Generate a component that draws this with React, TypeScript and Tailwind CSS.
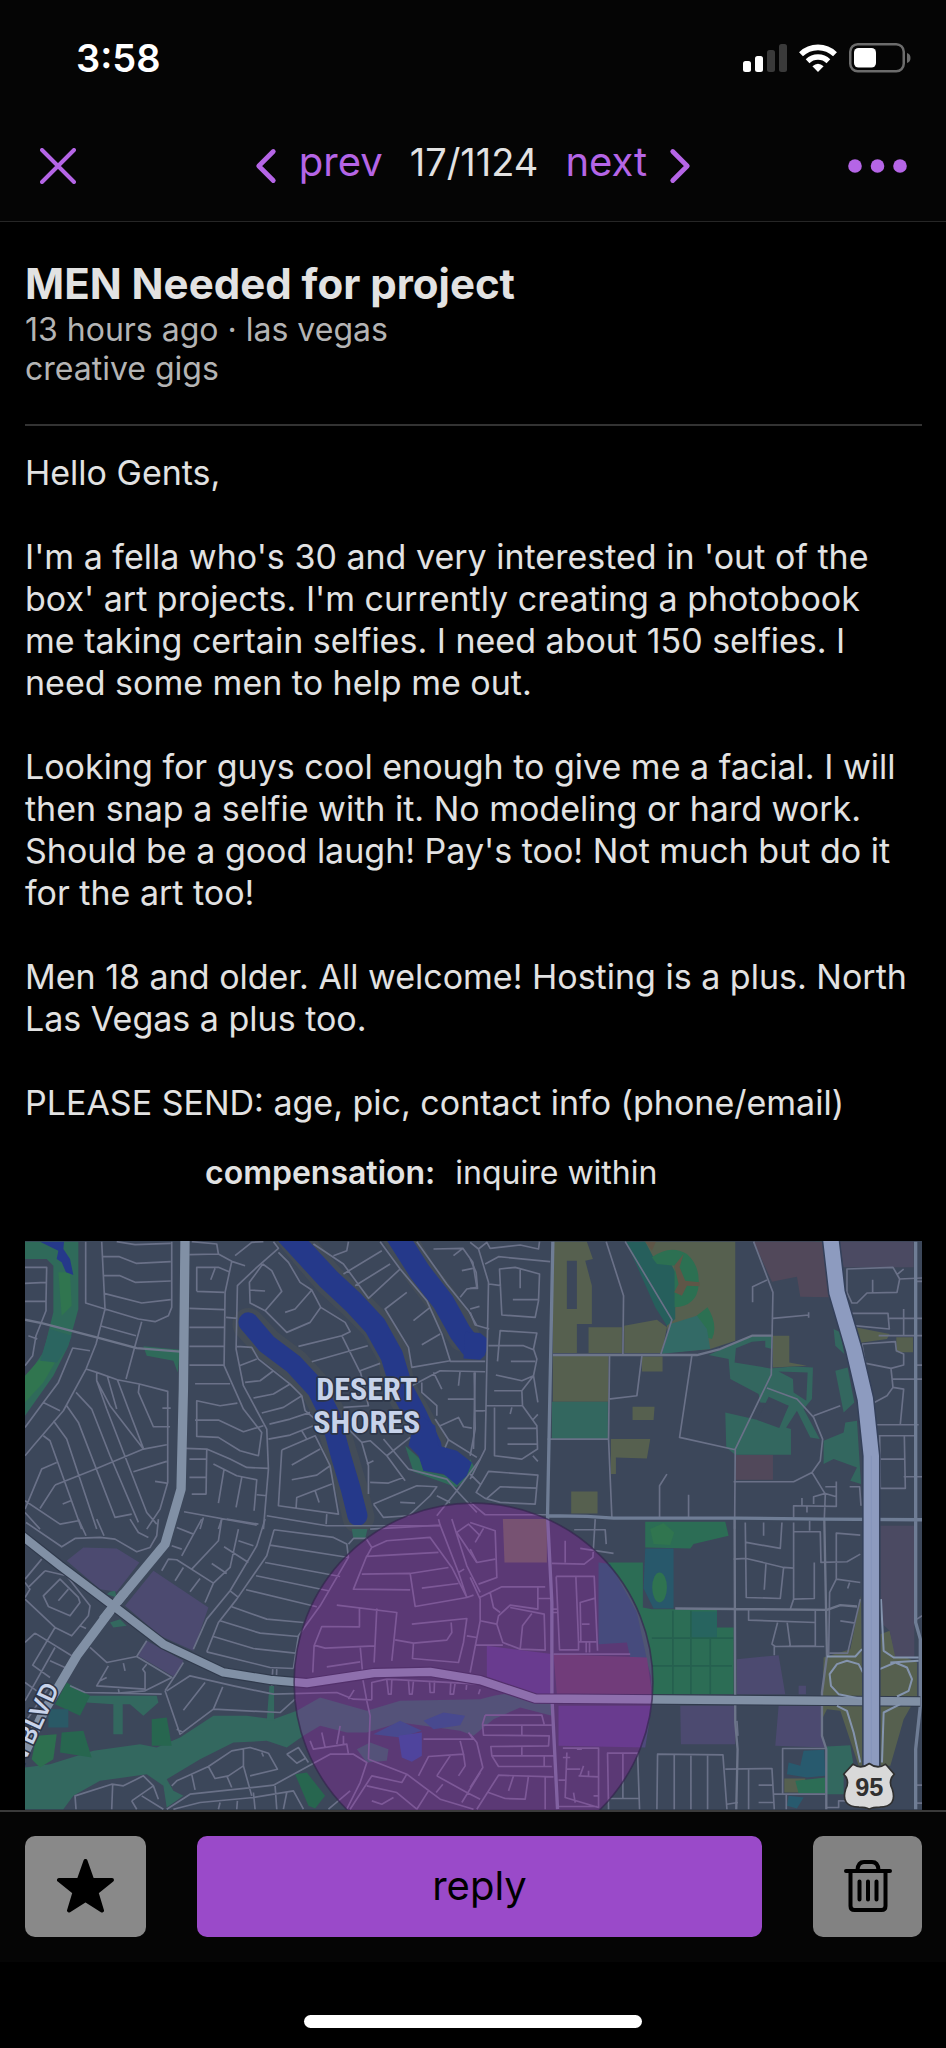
import React from 'react';
import { ChevronLeft, ChevronRight } from 'lucide-react';

const paragraphs = [
  'Hello Gents,',
  "I'm a fella who's 30 and very interested in 'out of the box' art projects. I'm currently creating a photobook me taking certain selfies. I need about 150 selfies. I need some men to help me out.",
  "Looking for guys cool enough to give me a facial. I will then snap a selfie with it. No modeling or hard work. Should be a good laugh! Pay's too! Not much but do it for the art too!",
  'Men 18 and older. All welcome! Hosting is a plus. North Las Vegas a plus too.',
  'PLEASE SEND: age, pic, contact info (phone/email)',
];

// Map data, one group per quadrant. Coordinates are local to the quadrant.
const streetsNW =
  'M75 115 140 115 138 217 75 217M75 163 138 160M138 217 138 245 108 320 98 380 75 410M257 38 257 222 315 240 415 270 465 278 505 260 515 235 515 38M305 38 315 240 288 345 258 420 190 545 100 650 75 680M307 83 358 83 408 103 512 98M310 140 360 140 405 160 512 156M312 193 425 222 512 212M350 38 405 47 512 43M300 290 408 320M425 278 405 350 378 450M75 595 130 520 175 460 218 357 270 365M130 520 180 545M85 320 112 330M258 420 290 430 352 452 418 465 503 487 503 760 480 840 440 900M290 430 290 455 330 530 430 660M352 452 385 540 430 658M322 442 350 540M200 530 235 580 345 865 395 855M228 490 275 540 330 680 415 880M290 455 320 540 440 850 470 885M160 575 200 630 290 900M130 620 150 635 245 900M75 840 125 720 170 700M165 768 290 718 430 660 500 647M400 728 500 697M465 757 500 762M165 768 120 838M75 815 180 885 235 875M75 850 120 900M188 825 212 815M418 465 415 490 460 593 510 593M487 537 512 537M575 38 650 45 655 75 568 77M655 75 695 97 735 110M705 80 755 40 790 38M695 97 675 190 672 410 730 540 785 610 775 680 720 665 655 625 590 622 590 515 660 530 712 522M585 573 655 573 730 608 790 590M590 187 590 115 655 115 687 128M590 187 672 190M645 118 632 152M568 238 672 242M568 295 672 295M568 352 672 352M568 408 672 408M585 464 690 464M678 265 712 268M820 38 835 58 770 115 712 170 708 360 730 470 800 600 805 720 790 900M788 105 815 125 845 187 795 245 750 222 748 160 788 105M748 183 795 186M795 245 860 310 930 280 962 235 935 183 900 160 865 100 835 70M855 250 885 240 935 183M962 235 1035 280 1050 308 1025 320 895 352M1025 320 1080 430M935 398 1103 350M1140 403 1080 425 1105 530 1030 535M710 352 755 355 775 390 870 465 905 500 915 545 950 575M718 410 770 390M735 460 780 455 820 425M760 507 820 495 870 465M785 552 850 535 905 500M808 585 870 570 930 550M805 630 870 618 940 590M845 663 945 620 990 710 1015 855 835 830 845 663M875 708 960 660M875 752 950 738 990 710M888 835 890 805 995 765M905 605 920 630M945 785 957 820M1045 38 1040 65 1000 80M940 45 1030 105 1105 208 1200 120M1140 38 1200 120 1280 215 1325 315 1350 395 1235 415 1225 355 1155 240 1220 190M1030 135 1145 65M1065 170 1170 105M1240 275 1290 235M1265 347 1320 315M1250 38 1340 165 1405 245 1430 290M1360 80 1388 58 1300 60M1388 58 1418 100 1430 175 1400 180 1380 205M1385 125 1418 118M1350 397 1455 397M1235 470 1320 425 1455 428M1265 460 1265 490 1310 530 1310 560M1305 570 1345 632 1430 685M1335 655 1345 632M1320 590 1375 565 1390 593 1415 597M1425 430 1420 660M1300 430 1325 480M1380 425 1375 470M1343 510 1425 510M1420 545 1450 545M1045 600 1085 640 1110 635 1160 680 1215 755M1085 640 1105 710 1105 795M1100 705 1120 695M1110 760 1165 762 1210 745M1160 680 1230 625M1150 630 1225 720 1340 750 1370 785 1440 690M1370 785 1430 850M1370 785 1310 860M1120 825 1250 770 1310 773 1290 800 1225 860 1150 865 1120 825M1200 820 1245 822M1310 800 1350 820M555 658 620 660 690 690 740 715 805 718M568 690 620 690M568 745 620 745M620 662 618 795 575 795M655 822 672 720M708 835 725 745M762 845 770 752 710 740 640 705M552 848 770 888M770 797 800 800M800 860 980 890 1320 890M980 855 978 885M610 865 600 900M665 870 655 900';

const streetsNE =
  'M408 38 460 200 458 375M465 38 605 272 572 375M850 38 908 190 903 437 795 660 793 900M908 268 1015 258M1015 250 1015 266M890 153 847 173 847 220M418 378 415 630 425 865M232 630 415 630M515 380 500 500 415 510M665 378 628 625 795 662M890 477 980 510 1030 565 1057 630 1050 695 1025 730 970 758 790 758M1030 560 1110 530M568 865 568 770 590 735M655 865 655 797M1025 730 1065 795 1062 870M970 865 970 830 1098 832 1098 757M1030 825 1030 803 1065 793 1098 803M1065 773 1098 773M1138 773 1168 773 1172 830M995 807 995 830M1010 830 1010 850M1130 120 1268 115 1288 150 1280 190 1190 192 1160 222 1145 222 1130 190zM1288 150 1355 147M1280 137 1300 120M1207 152 1207 190M1145 253 1253 253 1257 300 1150 290M1257 268 1355 268M1300 240 1300 320M1225 320 1355 320M1175 345 1275 338 1278 365 1300 375 1300 408 1262 418 1187 403M1262 418 1268 475 1250 500 1212 520M1268 475 1300 480 1290 585M1265 450 1355 450M1175 345 1215 587 1345 587M1225 620 1335 620M1228 620 1230 778 1305 778 1302 620M1228 690 1302 690M1300 743 1355 743M1338 157 1355 157M1338 408 1355 408M0 40 25 60 55 160 45 660 0 750M25 60 50 40 60 58 150 48 205 60 208 38M0 90 18 130 22 178 0 178M45 105 85 83 240 98M88 120 135 115 208 135 205 215 195 265 95 258zM57 165 93 170M150 120 150 178M128 212 205 212M0 240 28 232M0 250 15 288 57 300M82 397 90 305 200 312 190 360 200 390 190 440 155 485 157 530 200 590 202 660 155 690 73 680 73 535M55 350 160 350 190 362M122 397 195 397M77 438 155 455 190 440 203 520M72 485 155 485M45 530 157 530M120 555 125 535M112 598 200 598M112 645 200 645M188 572 203 556M188 680 203 697M12 430 15 600 0 680M15 545 45 545M18 790 55 727 203 738 195 825 90 820 45 808zM50 808 90 773 200 777M0 820 45 857 232 857M0 735 30 765';

const streetsSW =
  'M78 10 185 83 225 58 300 55 345 60 410 98 450 85 470 50 475 0M235 0 258 50M290 0 312 50M390 0 415 40 445 55M75 180 125 120M75 235 90 210 75 190M135 155 200 170 270 260 265 290 215 350 165 325 75 240M135 155 85 205M180 180 130 230 145 262 210 290 240 250 235 235zM175 245 205 210M240 320 258 328M165 325 98 438 150 475M105 342 215 410M75 370 105 342M75 545 165 385M150 425 195 445M75 490 110 515M75 610 150 500M270 385 320 430 410 412 440 365M410 412 515 475 435 515 355 522 255 520 210 500M325 440 290 500 435 510 435 460 428 450 440 435M370 432 375 455M355 510 358 525M300 485 320 475M485 525 355 522M515 80 545 90M530 25 580 45M485 155 505 120 530 122 640 192 690 145 715 30M575 150 655 65 665 0M545 110 605 0M640 192 615 250M525 185 550 145M570 218 600 178M635 133 680 163M672 83 745 130M715 65 760 80M680 0 775 15M795 0 770 80 690 215 620 300 580 390M822 32 800 110 710 240 655 310 620 398M822 32 1000 55 1040 75 1045 115 960 260 895 350 880 448M810 78 1045 115M795 130 1020 172M768 170 985 215M738 212 950 263M695 263 800 300 910 310M660 305 780 342 895 352M640 352 760 388 885 402M620 398 810 445 880 448M818 450 815 500M830 450 828 500M690 215 715 235M495 515 525 470 550 430M495 515 540 645 640 570 840 580 885 540M500 515 570 470 700 500 820 525 1010 520 1060 540 1115 542M1045 540 1062 512M550 573 615 490M640 570 668 503M530 630 550 640M515 800 530 785 625 742 695 695 750 685 805 702 832 750 750 770M730 690 730 740 755 830M575 765 585 812M680 770 695 805M730 740 685 770 645 778 625 742M785 700 790 712M500 870 570 825 820 798 990 705 1060 705 1100 730 1080 790 1040 870M860 705 895 685 925 730M860 705 890 732 915 718M228 870 225 830 335 795 370 800 430 770 460 800 475 840M338 795 335 870M395 845 460 800M395 845 410 870M425 830 490 870M520 870 600 850 760 835 880 815 910 870M655 870 660 850M710 870 712 845M760 820 765 870M825 800 830 870M850 870 860 820M985 870 1050 815M1115 85 1160 65 1290 55 1355 145 1400 235 1420 228M1100 110 1060 210 1230 212M1085 165 1230 163 1345 145M1100 112 1315 100M1230 163 1245 262 1400 235M1265 207 1375 193M1010 258 1190 280 1175 425M1130 268 1122 430M1078 268 1078 323 965 322 942 380 938 460M942 378 975 387 1125 380M1080 380 1087 455M980 443 1080 428M1235 315 1400 298 1390 370 1375 430 1237 418 1240 372M1185 362 1240 372 1340 363 1355 340 1353 310M1400 350 1430 355M1315 0 1320 18 1375 160 1400 235M1355 0 1400 140 1440 220M1375 160 1392 150M1440 50 1405 15 1370 40 1430 130M1110 30 1320 18M1045 75 1060 58 1098 58 1115 85 1100 112M1160 483 1165 525 1173 525 1175 483M1225 485 1228 525 1236 525 1240 485M1288 485 1290 520 1302 520 1303 485M1352 488 1350 525 1360 525 1365 490M1400 490 1398 512M1440 510 1435 525M1115 542 1115 490 1160 480 1440 495M1088 480 1100 545 1110 590 1105 720M930 665 940 690 1040 675 1045 705M965 640 975 685M1020 620 1010 675M1030 650 1030 675M1105 720 1220 765 1320 840 1420 870M1220 765 1205 790 1115 770 1050 870M1100 800 1190 820 1250 870M1115 845 1145 855 1180 835M1285 815 1250 870M1270 660 1420 660 1405 640M1255 770 1285 712 1390 705 1380 665M1390 705 1395 740 1375 770M1310 770 1350 710M1310 770 1400 820 1440 840M1385 850 1440 760M1308 820 1328 795';

const streetsSE =
  'M825 10 828 235 930 238 940 145 828 118 790 120M828 70 930 88 935 10M940 145 970 147M887 135 882 212M880 10 880 50M970 10 970 240 1032 238 1032 130M970 240 960 270M970 38 1050 38 1052 130 1130 128 1170 105M1018 5 1018 35M1170 48 1098 42 1098 180 1170 190M1098 180 1078 220 1075 410M1138 190 1132 208M835 272 835 303 1035 310M1035 275 1035 380 915 382 905 375 922 310M950 305 960 380M912 382 912 408M915 382 1062 382M1110 305 1155 312M1078 402 1132 402 1170 240M560 870 562 705 758 707 770 870M612 707 612 870M662 707 662 870M712 707 712 870M765 750 905 748 912 870M835 750 835 870M865 798 908 798M865 850 910 850M770 855 803 850M800 605 803 650M415 870 412 702 502 702 508 870M458 702 458 838M415 838 505 838M937 825 937 688 1065 688M910 825 1065 825M948 825 948 870M1070 865 1105 865 1105 845 1125 845M312 32 405 32 408 75M330 88 430 103M375 0 368 115 342 135 245 133M285 65 285 130M258 172 372 172 382 395M258 172 268 392 325 392 325 368 378 368M317 172 325 368M375 237 330 250 332 368M335 315 358 315M348 370 348 400M358 370 358 400M250 405 480 405M205 238 240 238M245 270 262 270M245 280 262 280M0 175 30 240 30 305 0 460M28 235 95 203 225 203M203 203 203 270 120 258 85 290 80 315 98 370 150 390 225 393 222 285 120 265M60 220 70 265 90 280M30 305 80 315M150 390 157 320 185 283M15 378 98 378M0 90 20 130 75 120M25 195 80 175 75 35 0 10M15 70 40 28M45 588 215 588 222 615M45 588 37 615 40 648 237 650 235 680 62 682 65 710 85 742 245 742M37 618 245 618M155 620 155 648M155 682 155 708M65 710 255 710M222 712 222 740M0 645 20 670 38 745 0 805M20 870 85 768 250 773M55 820 105 838 165 840 175 770M115 815 130 770M225 775 225 870M278 687 385 687 385 865 285 835 290 700M278 715 300 715M290 750 330 750M320 690 335 690M325 770 385 773M340 740 330 768M355 755 355 773M265 783 285 783M310 820 315 850M370 830 385 830M265 862 380 862M1340 300 1355 290M1338 798 1355 798M1338 852 1355 852';

const Map: React.FC = () => (
  <svg
    viewBox="0 0 2690 1706"
    className="block w-full h-auto"
    role="img"
    aria-label="Map of Desert Shores, Las Vegas"
    fill="none"
    strokeLinejoin="round"
  >
    <rect width="2690" height="1706" fill="#3c475a" />

    {/* land use */}
    <g transform="translate(-75 -36)">
      <path fill="#2f6a5a" d="M75 38H235V240L205 350 160 440 75 560V450L130 370 160 250V110L140 90H75z" />
      <path fill="#30754f" d="M175 130H210L215 230 185 260zM75 440 120 390 165 400 130 460 75 520z" />
      <path fill="#2b6560" d="M150 300 215 320 200 360 170 400 120 395z" />
      <path fill="#2f6a5a" d="M430 352 540 362 533 430 520 395 440 380zM1215 650 1260 690 1270 725 1345 740 1375 770 1425 720 1410 690 1370 775 1240 728z" />
      <g stroke="#434c58" strokeWidth="96" strokeLinecap="round">
        <path d="M875 20 985 150 1060 220 1130 290 1180 380 1195 470 1240 550 1290 640M745 285 800 345 880 405 950 480 990 560 1025 680 1055 780 1075 865M1195 20 1260 130 1330 220 1390 320" />
      </g>
      <g stroke="#25398a" strokeLinecap="round">
        <path strokeWidth="68" d="M865 20 985 150 1060 220 1125 290 1175 380 1205 480 1245 555 1290 650" />
        <path strokeWidth="60" d="M745 280 800 345 880 405 950 480 990 560 1022 680 1052 780 1072 860" />
        <path strokeWidth="66" d="M1190 20 1260 130 1330 220 1380 310 1410 350 1430 350" />
      </g>
      <path fill="#25398a" d="M1395 308 1440 312 1462 330 1455 378 1440 392 1390 388zM1250 550 1305 590 1315 650 1370 665 1415 700 1400 740 1370 768 1330 735 1270 725 1255 680 1225 650zM120 38H192L190 60 210 90 220 138 198 130 185 100 170 90 175 65z" />
    </g>
    <g transform="translate(1335 -36)">
      <path
        fill="#56604f"
        fillRule="evenodd"
        d="M248 38H350L368 90 345 95 365 170V285H320V372H248zM290 95V240H320V95zM355 295H455V372H355zM462 290 560 272 590 295 575 372H462zM520 38H795V335L720 360 600 370 590 290 600 265zM248 380H415V518H248zM515 382H577V427H515zM487 533H553L550 573H487zM422 630H540L530 688 437 685V735H422zM303 787H382V853H303zM908 320H957V400L1010 410 908 415zM1155 295 1258 315 1250 330 1165 342zM1278 325H1328V370H1278z"
      />
      <path fill="#265f5c" d="M468 38H525L555 95 600 100 615 130V270L590 290 555 235z" />
      <path fill="#2c7052" d="M545 85Q600 45 650 75 690 110 685 170 680 230 613 235V110L560 105zM640 290 712 235Q745 290 725 330L690 320z" />
      <path fill="#336a66" d="M600 285 680 260 710 300 720 360 575 374z" />
      <path fill="#5f5647" d="M612 190 625 165 612 110 640 75 628 115 645 155 688 160V172L650 170 635 200zM525 38H557L545 65z" />
      <path fill="#33675f" d="M245 518H413V630H245zM715 378 790 345 845 322 905 320V360L885 355V335L845 338 797 358 793 400 900 418 970 412 1028 415 1025 510 1000 540 1048 630 1020 625 980 545 945 600 925 590 955 530 870 520 865 495 780 450 775 390zM765 550 860 572 962 600V677H795L768 655zM1090 300 1110 310 1122 375 1095 350zM1095 425 1132 415 1152 520 1120 550 1110 500zM1060 635 1120 610 1125 580 1160 575 1172 765 1140 755 1160 715 1090 690 1060 705zM1035 38H1062V55H1040z" />
      <path fill="#3c475a" d="M925 427 1012 430 1008 515 970 490 968 450zM862 573 895 503 955 530 927 597z" />
      <path fill="#51485a" d="M850 38H1062L1078 205 990 203 980 143 905 158zM795 678H908V752H795z" />
      <path fill="#4b4a62" d="M1108 38H1330V115H1120z" />
    </g>
    <g transform="translate(-75 834)">
      <path fill="#4c4a70" d="M200 125 250 85 350 88 418 130 350 218 300 210zM460 155 625 265 580 395 480 350 375 260zM440 365 550 425 525 475 415 410z" />
      <path
        fill="#33685f"
        d="M75 745 150 735 280 695 420 675 470 685 540 655 640 590 740 590 820 600 890 575 960 535 1100 575 1200 545 1440 540 1480 530 1600 510 1655 490V590L1560 565 1480 600 1420 650 1380 635 1200 610 1100 640 1040 640 960 620 910 650 860 685 800 665 700 670 600 720 500 780 520 815 550 830 500 865 490 800 440 765 300 785 220 830 190 870H75z"
      />
      <path fill="#33685f" d="M250 530H470L475 550 430 590 390 555H368V645H340V555L260 550zM808 500H822V605H800zM1055 30H1102L1095 60H1060zM1070 690 1110 670 1165 690 1160 725 1100 730zM330 218 345 215 350 235 320 225zM330 310 360 300 380 320 340 325z" />
      <path fill="#27664f" d="M200 490 270 530 240 590 165 555zM185 640 250 635 275 715 180 700zM455 600 500 595 515 680H455zM885 765 920 760 975 830 945 868 925 860z" />
      <path fill="#2d6f4f" d="M110 650 170 645 160 720 120 745 95 720z" />
      <path fill="#2a5966" d="M145 570H205V625H145z" />
      <path fill="#225c7c" d="M1120 645 1200 605 1265 635 1200 655zM1270 605 1330 580 1395 590 1380 618 1300 630z" />
      <path fill="#2c5690" d="M1195 650 1265 640V710L1235 728 1205 715z" />
    </g>
    <g transform="translate(1335 834)">
      <path fill="#2c6d55" d="M525 8H765L775 50 670 75 660 88 525 85zM412 130H518V265L545 270V480L490 290zM520 270H740V325H790V525H545L540 400z" />
      <path fill="#30754f" d="M540 30 580 12 612 40 600 78 550 75z" />
      <path fill="#28586b" d="M525 88H610V268H550L520 208z" />
      <ellipse cx="568" cy="205" rx="22" ry="45" fill="#2f7350" />
      <path fill="#27645f" d="M662 277H740V357H662z" />
      <path stroke="#25604f" strokeWidth="5" d="M545 357H790M545 440H785M608 275V525M662 275V525M720 357V525" />
      <path fill="#205f64" d="M385 130 420 135 500 280 530 420 480 415 470 370 385 375z" />
      <path fill="#4c4a70" d="M800 420 925 408 945 525H800zM985 500H1007V525H985zM630 560H795V675H632zM925 560H1055V650L1065 685 915 680z" />
      <path fill="#4f497c" d="M50 380 250 405V525H185L50 490zM265 560H545L525 685 265 680z" />
      <path fill="#5a4b60" d="M250 405 530 415 545 525H260z" />
      <path fill="#626856" d="M98 0H230V130H103z" />
      <path fill="#56604f" d="M1140 390 1172 230 1178 740H1165L1110 575 1070 570 1055 600 1060 415zM1230 345 1258 335 1275 400 1340 430V530L1300 600 1260 740H1230zM942 778H1005V820H942z" />
      <path fill="#4b4a62" d="M1230 20H1332V415H1275L1258 335 1232 310z" />
      <path fill="#285a6e" d="M1000 695 1062 692 1065 770 1010 775 950 765 955 730 990 740zM955 830 1000 835 980 868 950 860z" />
      <path fill="#2c6d55" d="M975 785 1065 775V822H985z" />
      <path fill="#33685f" d="M1070 682 1140 678 1150 740 1120 770V825H1070z" />
    </g>

    {/* local streets */}
    <g stroke="#6a7188" strokeWidth="5">
      <path transform="translate(-75 -36)" d={streetsNW} />
      <path transform="translate(1335 -36)" d={streetsNE} />
      <path transform="translate(-75 834)" d={streetsSW} />
      <path transform="translate(1335 834)" d={streetsSE} />
    </g>
    <g stroke="#6d758a" strokeWidth="7">
      <path transform="translate(-75 -36)" d="M75 272 125 282 290 325 410 357 540 368" />
      <path transform="translate(1335 -36)" d="M248 378H680L750 360 845 320H908" />
      <path transform="translate(1335 834)" d="M793 0 795 610 802 690 798 870M1062 0 1070 410 1055 520V650L1068 690V870M615 268 1070 272 1110 258 1160 262" />
    </g>
    <g stroke="#6f7d95" strokeWidth="10">
      <path transform="translate(1335 -36)" d="M248 38 232 860 245 1120V1400L262 1740M232 860 350 862 430 867H800L1060 870 1355 872M1336 38V1180L1350 1230V1430L1336 1560V1740" />
    </g>

    {/* arterials */}
    <g>
      <path transform="translate(-75 -36)" stroke="#8190a5" strokeWidth="28" d="M555 20 550 480 543 780 495 945 340 1132 230 1280 130 1450 75 1570" />
      <path transform="translate(-75 834)" stroke="#303a4c" strokeWidth="32" d="M60 45 180 140 340 260 490 375 670 460 810 482 920 492 1120 462 1290 458 1440 483 1605 538 2760 547" />
      <path transform="translate(-75 834)" stroke="#8190a5" strokeWidth="25" d="M60 45 180 140 340 260 490 375 670 460 810 482 920 492 1120 462 1290 458 1440 483 1605 538 2760 547" />
      <path transform="translate(-75 834)" stroke="#8190a5" strokeWidth="28" d="M372 222 308 302" />
    </g>

    {/* freeway and its ramps */}
    <g transform="translate(1335 834)">
      <path
        stroke="#8494ae"
        strokeWidth="6"
        d="M1070 412H1155L1175 390M1178 460 1165 435 1130 425 1100 435 1078 465 1082 500 1105 525 1178 540M1228 450 1275 430 1310 445 1325 480 1315 515 1280 532M1232 240 1240 395 1270 415H1345M1260 430 1345 425M1100 560 1130 575 1150 640 1170 730M1290 555 1240 580 1235 730"
      />
      <path stroke="#34405a" strokeWidth="55" d="M1078-870 1100-680 1150-510 1185-360 1203-190V740" />
      <path stroke="#8d9bbf" strokeWidth="46" d="M1078-870 1100-680 1150-510 1185-360 1203-190V740" />
      <path stroke="#8190b8" strokeWidth="2" d="M1203-190V740" />
    </g>

    {/* approximate location */}
    <circle cx="1345" cy="1324" r="538" fill="#b715c6" fillOpacity="0.26" stroke="#33264d" strokeOpacity="0.7" strokeWidth="5" />

    <g
      fill="#c8d3ea"
      stroke="#2c3547"
      strokeWidth="10"
      paintOrder="stroke"
      className="font-['Liberation_Sans_Narrow','Roboto_Condensed',sans-serif] font-bold"
    >
      <text x="1025" y="478" fontSize="96" textAnchor="middle">DESERT</text>
      <text x="1025" y="577" fontSize="96" textAnchor="middle">SHORES</text>
      <text transform="translate(104 1340) rotate(-65)" fontSize="74" textAnchor="end" className="font-['Inter',sans-serif] font-semibold">N BLVD</text>
    </g>

    <g transform="translate(1335 834)">
      <path
        fill="#d9d9d9"
        stroke="#303030"
        strokeWidth="5"
        d="M1148 735Q1172 752 1197 733 1222 752 1246 735L1272 765Q1252 785 1266 810 1282 862 1228 864 1208 864 1197 870 1186 864 1166 864 1110 862 1126 810 1140 785 1120 765z"
      />
      <text x="1197" y="831" fontSize="76" textAnchor="middle" fill="#303030" className="font-['Liberation_Sans',sans-serif] font-bold">95</text>
    </g>
  </svg>
);

const StatusBar: React.FC = () => (
  <div className="flex items-center justify-between pl-[76px] pr-[35px] pt-8">
    <span className="text-[38px] leading-[52px] font-semibold text-white">3:58</span>
    <div className="flex items-center gap-3">
      <svg width="44" height="28" viewBox="0 0 44 28" aria-hidden="true">
        <rect x="0" y="17" width="8" height="11" rx="2.5" fill="#fff" />
        <rect x="12" y="12" width="8" height="16" rx="2.5" fill="#fff" />
        <rect x="24" y="6" width="8" height="22" rx="2.5" fill="#3a3a3a" />
        <rect x="36" y="0" width="8" height="28" rx="2.5" fill="#3a3a3a" />
      </svg>
      <svg width="38" height="28" viewBox="0 0 38 28" fill="none" stroke="#fff" aria-hidden="true">
        <path strokeWidth="5.6" d="M2 10.2A24.5 24.5 0 0 1 36 10.2" />
        <path strokeWidth="5.4" d="M8.6 17.2A15 15 0 0 1 29.4 17.2" />
        <path fill="#fff" stroke="none" d="M19 28 13.4 22.3Q19 17 24.6 22.3z" />
      </svg>
      <svg width="62" height="30" viewBox="0 0 62 30" aria-hidden="true">
        <rect x="1.25" y="1.25" width="53.5" height="27" rx="7.5" fill="none" stroke="#6c6c6c" strokeWidth="2.5" />
        <rect x="5" y="5" width="22" height="19.5" rx="4.5" fill="#fff" />
        <path d="M58 10Q61.500 11 61.500 15 61.500 19 58 20z" fill="#6c6c6c" />
      </svg>
    </div>
  </div>
);

const App: React.FC = () => {
  return (
    <div className="min-h-screen bg-black text-[#e2e2e2] font-['Inter',sans-serif]">
      <header className="bg-[#050505] border-b border-[#262626]">
        <StatusBar />
        <nav className="flex items-center justify-between pl-10 pr-[39px] pt-[54px] pb-[27px] text-[#b565e6] text-[40px] leading-[48px]">
          <button type="button" aria-label="close" className="w-[58px]">
            <svg width="36" height="36" viewBox="0 0 36 36" stroke="currentColor" strokeWidth="4" strokeLinecap="round" aria-hidden="true">
              <path d="M2 2 34 34M34 2 2 34" />
            </svg>
          </button>
          <div className="flex items-center gap-[27px]">
            <button type="button" className="flex items-center gap-1">
              <ChevronLeft className="size-[58px] -my-3 -mx-3" strokeWidth={2} />
              <span className="pl-3 pb-2">prev</span>
            </button>
            <span className="pb-2 text-[38px] text-[#e2e2e2]">17/1124</span>
            <button type="button" className="flex items-center gap-1">
              <span className="pr-3 pb-2">next</span>
              <ChevronRight className="size-[58px] -my-3 -mx-3" strokeWidth={2} />
            </button>
          </div>
          <button type="button" aria-label="more">
            <svg width="59" height="14" viewBox="0 0 59 14" fill="currentColor" aria-hidden="true">
              <circle cx="7" cy="7" r="6.800" />
              <circle cx="29.500" cy="7" r="6.800" />
              <circle cx="52" cy="7" r="6.800" />
            </svg>
          </button>
        </nav>
      </header>

      <main className="pl-[25px] pr-6 pt-9">
        <h1 className="text-[42px] leading-[52px] font-bold">MEN Needed for project</h1>
        <p className="text-[32px] leading-[39px] text-[#b4b4b4]">
          13 hours ago · las vegas
          <br />
          creative gigs
        </p>
        <hr className="mt-9 border-t-2 border-[#333333]" />
        <div className="flex flex-col gap-[42px] pt-[26px] pr-2 text-[34px] leading-[42px]">
          {paragraphs.map((text) => (
            <p key={text}>{text}</p>
          ))}
        </div>
        <dl className="flex gap-5 pl-[180px] pt-7 pb-[47px] text-[32px] leading-[42px]">
          <dt className="font-semibold">compensation:</dt>
          <dd>inquire within</dd>
        </dl>
        <Map />
      </main>

      <footer>
        <div className="flex gap-[51px] bg-[#050505] border-t-2 border-[#3a3a3a] pl-[25px] pr-6 pt-6 pb-[25px]">
          <button type="button" aria-label="favorite" className="flex items-center justify-center w-[121px] h-[101px] rounded-[10px] bg-[#898989]">
            <svg width="57" height="54" viewBox="0 0 57 54" stroke="#000" strokeWidth="4" strokeLinejoin="round" aria-hidden="true">
              <path d="M28.500 2 35.200 20.800 55 21 39.500 33.400 45 51.500 28.500 41 12 51.500 17.500 33.400 2 21 21.800 20.800z" />
            </svg>
          </button>
          <button type="button" className="flex-1 rounded-[10px] bg-[#9a4ac9] text-[40px] text-black">reply</button>
          <button type="button" aria-label="hide" className="flex items-center justify-center w-[109px] h-[101px] rounded-[10px] bg-[#828282]">
            <svg width="48" height="52" viewBox="0 0 48 52" fill="none" stroke="#000" strokeWidth="4" aria-hidden="true">
              <path strokeLinecap="round" d="M2 11H46M13.500 10Q14 2 20 2H28Q34 2 34.500 10M15.500 21.500V39.500M24 21.500V39.500M32.500 21.500V39.500" />
              <path d="M6.500 11V46Q6.500 50 10.500 50H37.500Q41.500 50 41.500 46V11" />
            </svg>
          </button>
        </div>
        <div className="flex justify-center pt-[53px] pb-4">
          <div className="w-[338px] h-[13px] rounded-full bg-white" />
        </div>
      </footer>
    </div>
  );
};

export default App;
